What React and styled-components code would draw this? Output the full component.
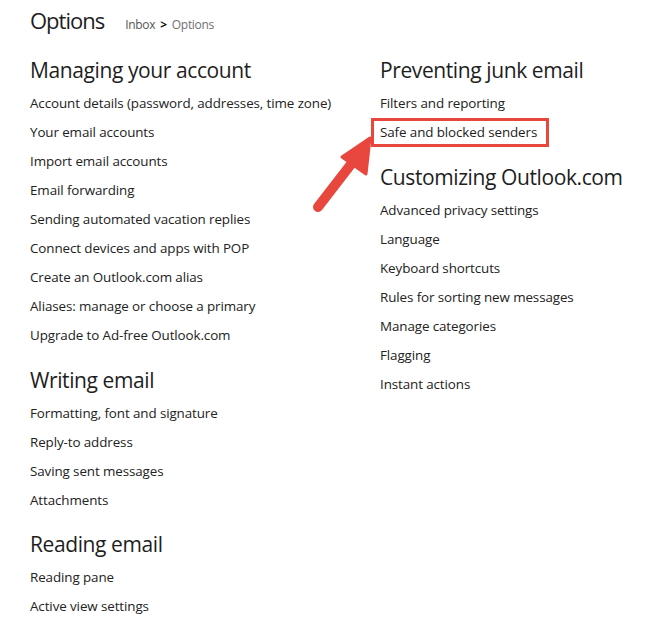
import React from 'react'
import styled, { createGlobalStyle } from 'styled-components'

const GlobalStyle = createGlobalStyle`
  body {
    margin: 0;
    background: #fff;
    font-family: "Open Sans", "Liberation Sans", sans-serif;
    color: #262626;
  }
`

const Page = styled.div`
  position: relative;
  width: 652px;
  height: 626px;
  padding-left: 30px;
  box-sizing: border-box;
  overflow: hidden;
`

const TitleRow = styled.div`
  display: flex;
  align-items: baseline;
  height: 40px;
  padding-top: 4px;
  box-sizing: border-box;
`

const Title = styled.h1`
  margin: 0;
  font-size: 22px;
  font-weight: 400;
  line-height: 32px;
  letter-spacing: -1px;
  color: #1e1e1e;
`

const Crumbs = styled.div`
  margin-left: 21px;
  font-size: 12px;
  letter-spacing: -0.3px;
  color: #555;
  span {
    margin: 0 5px;
    color: #111;
    font-weight: 700;
  }
`

const CrumbCurrent = styled.em`
  font-style: normal;
  color: #707070;
`

const Columns = styled.div`
  display: grid;
  grid-template-columns: 350px 1fr;
  margin-top: 12px;
`

const Section = styled.section`
  margin-bottom: 11.5px;
`

const Heading = styled.h2`
  margin: 0;
  font-size: 21px;
  font-weight: 400;
  line-height: 37px;
  letter-spacing: -0.4px;
  color: #1e1e1e;
`

const List = styled.ul`
  margin: 0;
  padding: 0;
  list-style: none;
`

const Item = styled.li`
  font-size: 13.4px;
  line-height: 29px;
  letter-spacing: -0.1px;
  color: #222;
  a {
    color: inherit;
    text-decoration: none;
    display: inline-block;
    ${p => p.$marked && `
      margin-left: -9px;
      padding: 0 12px 0 9px;
      outline: 3px solid #e8473e;
      outline-offset: -3px;
    `}
  }
`

const Arrow = styled.svg`
  position: absolute;
  left: 300px;
  top: 125px;
`

const left = [
  ['Managing your account', [
    'Account details (password, addresses, time zone)',
    'Your email accounts',
    'Import email accounts',
    'Email forwarding',
    'Sending automated vacation replies',
    'Connect devices and apps with POP',
    'Create an Outlook.com alias',
    'Aliases: manage or choose a primary',
    'Upgrade to Ad-free Outlook.com',
  ]],
  ['Writing email', [
    'Formatting, font and signature',
    'Reply-to address',
    'Saving sent messages',
    'Attachments',
  ]],
  ['Reading email', [
    'Reading pane',
    'Active view settings',
  ]],
]

const right = [
  ['Preventing junk email', [
    'Filters and reporting',
    'Safe and blocked senders',
  ]],
  ['Customizing Outlook.com', [
    'Advanced privacy settings',
    'Language',
    'Keyboard shortcuts',
    'Rules for sorting new messages',
    'Manage categories',
    'Flagging',
    'Instant actions',
  ]],
]

function Column({ sections }) {
  return (
    <div>
      {sections.map(([title, items]) => (
        <Section key={title}>
          <Heading>{title}</Heading>
          <List>
            {items.map(i => (
              <Item key={i} $marked={i === 'Safe and blocked senders'}>
                <a href="#">{i}</a>
              </Item>
            ))}
          </List>
        </Section>
      ))}
    </div>
  )
}

export default function App() {
  return (
    <Page>
      <GlobalStyle />
      <TitleRow>
        <Title>Options</Title>
        <Crumbs>Inbox<span>&gt;</span><CrumbCurrent>Options</CrumbCurrent></Crumbs>
      </TitleRow>
      <Columns>
        <Column sections={left} />
        <Column sections={right} />
      </Columns>
      {/* annotation arrow pointing at the highlighted link */}
      <Arrow width="80" height="95" viewBox="300 125 80 95">
        <line x1="318" y1="207" x2="352" y2="163" stroke="#e8473e" strokeWidth="10" strokeLinecap="round" />
        <polygon points="370,138 342,157 366,174" fill="#e8473e" stroke="#e8473e" strokeWidth="3" strokeLinejoin="round" />
      </Arrow>
    </Page>
  )
}
